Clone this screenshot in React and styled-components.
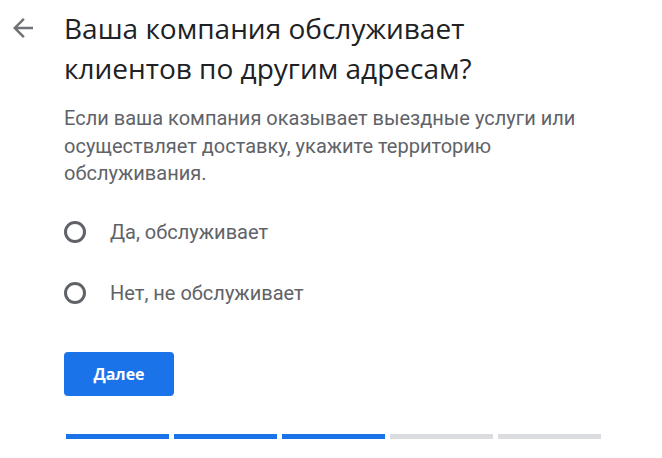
import React from "react";
import styled, { createGlobalStyle } from "styled-components";

const Global = createGlobalStyle`
  html, body { margin: 0; padding: 0; background: #fff; }
  body { font-family: Roboto, "Noto Sans", sans-serif; }
`;

const Page = styled.div`
  display: grid;
  grid-template-columns: 64px 1fr;
  padding-top: 8px;
  width: 662px;
  height: 458px;
  box-sizing: border-box;
  overflow: hidden;
`;

const BackButton = styled.button`
  width: 30px;
  height: 30px;
  margin: 5px 0 0 8px;
  padding: 0;
  border: 0;
  background: none;
  display: flex;
  align-items: center;
  justify-content: center;
  cursor: pointer;
`;

const Content = styled.div`
  display: flex;
  flex-direction: column;
  padding-right: 40px;
`;

const Heading = styled.h1`
  margin: 0;
  font-family: "Open Sans", "Noto Sans", sans-serif;
  font-weight: 400;
  font-size: 28px;
  line-height: 40px;
  color: #202124;
  width: 500px;
`;

const Description = styled.p`
  margin: 17px 0 0;
  font-size: 20px;
  line-height: 27.5px;
  color: #5f6368;
  width: 530px;
`;

const Options = styled.div`
  display: flex;
  flex-direction: column;
  gap: 17px;
  margin-top: 22px;
`;

const Option = styled.label`
  display: flex;
  align-items: center;
  gap: 24px;
  height: 44px;
  font-size: 20px;
  color: #5f6368;
  cursor: pointer;
`;

const Radio = styled.span`
  width: 22px;
  height: 22px;
  box-sizing: border-box;
  border: 3px solid #5f6368;
  border-radius: 50%;
  flex-shrink: 0;
`;

const NextButton = styled.button`
  margin-top: 37px;
  width: 110px;
  height: 44px;
  border: 0;
  border-radius: 4px;
  background: #1a73e8;
  color: #fff;
  font-family: "Open Sans", Roboto, sans-serif;
  font-weight: 700;
  font-size: 16px;
  cursor: pointer;
  padding: 0;
`;

const Progress = styled.div`
  display: flex;
  gap: 5px;
  margin-top: 38px;
  margin-left: 2px;
`;

const Segment = styled.div`
  width: 103px;
  height: 5px;
  background: ${(p) => (p.$done ? "#1a73e8" : "#dadce0")};
`;

const steps = [true, true, true, false, false];

export default function App() {
  return (
    <>
      <Global />
      <Page>
        <BackButton aria-label="Назад">
          <svg width="30" height="30" viewBox="0 0 24 24">
            <path
              fill="#6f7276"
              d="M20 11H7.83l5.59-5.59L12 4l-8 8 8 8 1.41-1.41L7.83 13H20v-2z"
            />
          </svg>
        </BackButton>
        <Content>
          <Heading>Ваша компания обслуживает клиентов по другим адресам?</Heading>
          <Description>
            Если ваша компания оказывает выездные услуги или осуществляет
            доставку, укажите территорию обслуживания.
          </Description>
          <Options>
            <Option>
              <Radio />
              Да, обслуживает
            </Option>
            <Option>
              <Radio />
              Нет, не обслуживает
            </Option>
          </Options>
          <div>
            <NextButton>Далее</NextButton>
          </div>
          <Progress>
            {steps.map((d, i) => (
              <Segment key={i} $done={d} />
            ))}
          </Progress>
        </Content>
      </Page>
    </>
  );
}
